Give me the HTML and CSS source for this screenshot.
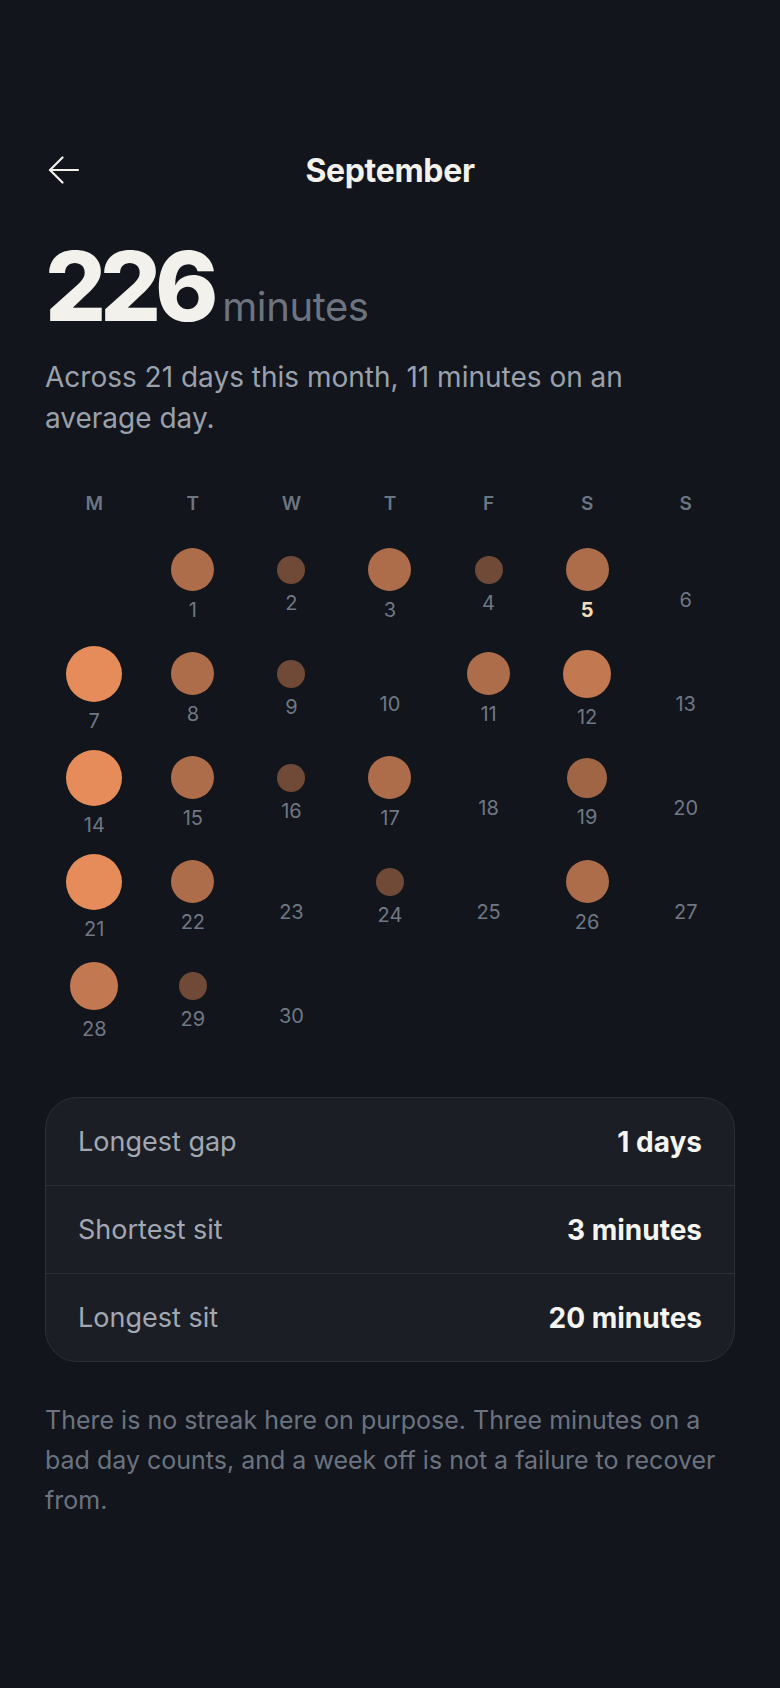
FILE: index.html
```html
<!DOCTYPE html>
<html lang="en">
<head>
  <meta charset="UTF-8">
  <title>September - Sitting log</title>
  <link rel="stylesheet" href="styles.css">
</head>
<body>
  <div class="screen">
    <header class="topbar">
      <button class="back" type="button" aria-label="Back">
        <svg width="32" height="28" viewBox="0 0 32 28" fill="none" stroke="currentColor" stroke-width="2.2" stroke-linecap="round" stroke-linejoin="round">
          <path d="M14.5 1.5 2 14l12.5 12.5"/>
          <path d="M2 14h28"/>
        </svg>
      </button>
      <h1>September</h1>
      <span class="spacer"></span>
    </header>

    <section class="total">
      <div class="total-line">
        <span class="total-num">226</span>
        <span class="total-unit">minutes</span>
      </div>
      <p class="total-note">Across 21 days this month, 11 minutes on an average day.</p>
    </section>

    <div class="weekdays">
      <span>M</span><span>T</span><span>W</span><span>T</span><span>F</span><span>S</span><span>S</span>
    </div>

    <div class="calendar" id="calendar"></div>

    <div class="stats">
      <div class="stat-row">
        <span class="stat-label">Longest gap</span>
        <span class="stat-value">1 days</span>
      </div>
      <div class="stat-row">
        <span class="stat-label">Shortest sit</span>
        <span class="stat-value">3 minutes</span>
      </div>
      <div class="stat-row">
        <span class="stat-label">Longest sit</span>
        <span class="stat-value">20 minutes</span>
      </div>
    </div>

    <p class="footnote">There is no streak here on purpose. Three minutes on a bad day counts, and a week off is not a failure to recover from.</p>
  </div>

  <script>
    // minutes sat per day of the month
    const minutes = {
      1: 12, 2: 3, 3: 12, 4: 3, 5: 12,
      7: 20, 8: 12, 9: 3, 11: 12, 12: 15,
      14: 20, 15: 12, 16: 3, 17: 12, 19: 10,
      21: 20, 22: 12, 24: 3, 26: 12,
      28: 15, 29: 3
    };
    const DAYS = 30;
    const FIRST_WEEKDAY = 1; // Sept 1st is a Tuesday
    const TODAY = 5;

    const calendar = document.getElementById('calendar');

    for (let i = 0; i < FIRST_WEEKDAY; i++) {
      calendar.appendChild(document.createElement('div'));
    }

    for (let day = 1; day <= DAYS; day++) {
      const cell = document.createElement('div');
      cell.className = 'day';

      const dot = document.createElement('span');
      dot.className = 'dot';
      const m = minutes[day];
      if (m) {
        const size = Math.round(23 + m * 1.65);
        dot.style.width = size + 'px';
        dot.style.height = size + 'px';
        dot.style.opacity = (0.35 + 0.65 * m / 20).toFixed(2);
      } else {
        dot.classList.add('empty');
      }

      const num = document.createElement('span');
      num.className = day === TODAY ? 'num today' : 'num';
      num.textContent = day;

      cell.appendChild(dot);
      cell.appendChild(num);
      calendar.appendChild(cell);
    }
  </script>
</body>
</html>
```

FILE: styles.css
```css
body {
  margin: 0;
  background-color: #12151b;
  font-family: Inter, "Noto Sans", sans-serif;
  color: #f3f1ec;
}

.screen {
  padding: 146px 45px 80px;
}

.topbar {
  display: flex;
  align-items: center;
  justify-content: space-between;
  height: 48px;
}

.back {
  display: flex;
  align-items: center;
  width: 48px;
  height: 48px;
  padding: 0 0 0 3px;
  background: none;
  border: none;
  color: #f3f1ec;
  cursor: pointer;
}

.topbar h1 {
  margin: 0;
  font-size: 32px;
  font-weight: 700;
  letter-spacing: -0.01em;
}

.spacer {
  width: 48px;
}

.total {
  margin-top: 44px;
}

.total-line {
  display: flex;
  align-items: baseline;
  gap: 10px;
}

.total-num {
  font-size: 96px;
  font-weight: 800;
  line-height: 96px;
  letter-spacing: -0.065em;
  color: #f3f1ec;
}

.total-unit {
  font-size: 40px;
  color: #6c7480;
  letter-spacing: -0.01em;
}

.total-note {
  margin: 23px 0 0;
  font-size: 28px;
  line-height: 41px;
  color: #9aa1ac;
}

.weekdays {
  display: grid;
  grid-template-columns: repeat(7, 1fr);
  margin-top: 53px;
  font-size: 19px;
  font-weight: 600;
  line-height: 24px;
  color: #6c7582;
  text-align: center;
}

.calendar {
  display: grid;
  grid-template-columns: repeat(7, 1fr);
  grid-auto-rows: 104px;
  margin-top: 17px;
}

.day {
  display: flex;
  flex-direction: column;
  align-items: center;
  justify-content: center;
  gap: 7px;
}

.dot {
  display: block;
  border-radius: 50%;
  background-color: #e58c5a;
}

.dot.empty {
  width: 22px;
  height: 22px;
  background: none;
}

.num {
  font-size: 20px;
  line-height: 24px;
  color: #6f7884;
}

.num.today {
  font-weight: 700;
  color: #f2ddb6;
}

.stats {
  margin-top: 44px;
  background-color: #1b1e25;
  border: 1px solid #2b2f37;
  border-radius: 32px;
  overflow: hidden;
}

.stat-row {
  display: flex;
  align-items: center;
  justify-content: space-between;
  height: 87px;
  padding: 0 32px;
}

.stat-row + .stat-row {
  border-top: 1px solid #2b2f37;
}

.stat-label {
  font-size: 27px;
  color: #a2a8b2;
}

.stat-value {
  font-size: 28px;
  font-weight: 700;
  color: #f5f4f0;
}

.footnote {
  margin: 38px 0 0;
  font-size: 25px;
  line-height: 40px;
  color: #6b7380;
}
```
